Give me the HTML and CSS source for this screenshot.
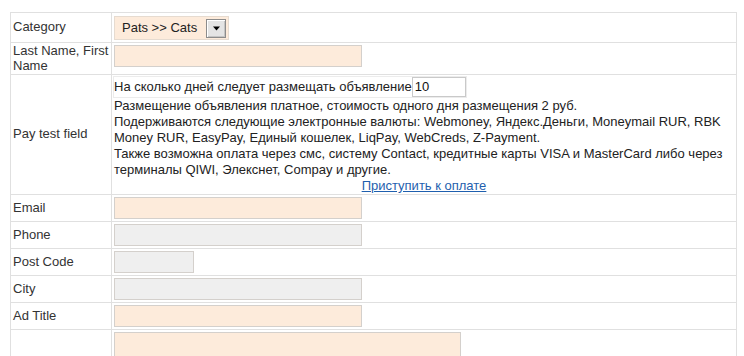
FILE: index.html
```html
<!DOCTYPE html>
<html>
<head>
<meta charset="utf-8">
<link rel="stylesheet" href="styles.css">
</head>
<body>
<table class="form">
  <tr>
    <td class="label">Category</td>
    <td class="field">
      <div class="select"><span class="select-value">Pats &gt;&gt; Cats</span><span class="select-btn"><svg width="9" height="5" viewBox="0 0 9 5"><path d="M1 0.5h7L4.5 4.5z" fill="#000"/></svg></span></div>
    </td>
  </tr>
  <tr>
    <td class="label">Last Name, First Name</td>
    <td class="field"><input class="inp req" type="text"></td>
  </tr>
  <tr>
    <td class="label">Pay test field</td>
    <td class="field pay">
      <table class="days"><tr><td>На сколько дней следует размещать объявление<input class="days-inp" type="text" value="10"></td></tr></table>
      <div class="pay-text">Размещение объявления платное, стоимость одного дня размещения 2 руб.</div>
      <div class="pay-text">Подерживаются следующие электронные валюты: Webmoney, Яндекс.Деньги, Moneymail RUR, RBK Money RUR, EasyPay, Единый кошелек, LiqPay, WebCreds, Z-Payment.</div>
      <div class="pay-text">Также возможна оплата через смс, систему Contact, кредитные карты VISA и MasterCard либо через терминалы QIWI, Элекснет, Compay и другие.</div>
      <div class="pay-text pay-link"><a href="#">Приступить к оплате</a></div>
    </td>
  </tr>
  <tr>
    <td class="label">Email</td>
    <td class="field"><input class="inp req" type="text"></td>
  </tr>
  <tr>
    <td class="label">Phone</td>
    <td class="field"><input class="inp opt" type="text"></td>
  </tr>
  <tr>
    <td class="label">Post Code</td>
    <td class="field"><input class="inp opt short" type="text"></td>
  </tr>
  <tr>
    <td class="label">City</td>
    <td class="field"><input class="inp opt" type="text"></td>
  </tr>
  <tr>
    <td class="label">Ad Title</td>
    <td class="field"><input class="inp req" type="text"></td>
  </tr>
  <tr>
    <td class="label"></td>
    <td class="field field-area"><textarea class="area"></textarea></td>
  </tr>
</table>
</body>
</html>
```

FILE: styles.css
```css
html, body {
  margin: 0;
  padding: 0;
  background: #fff;
}

body {
  font-family: "Liberation Sans", Arial, sans-serif;
  font-size: 13px;
  color: #333;
}

.form {
  border-collapse: collapse;
  width: 727px;
  margin: 12px 0 0 10px;
}

.form > tbody > tr > td {
  border: 1px solid #e0e0e0;
}

.label {
  width: 96px;
  padding: 1px 2px;
  line-height: 14.5px;
  vertical-align: middle;
}

.field {
  padding: 2px 2px;
  vertical-align: top;
}

.inp {
  display: block;
  box-sizing: border-box;
  width: 248px;
  height: 22px;
  margin: 0;
  border: 1px solid #d4d0cc;
  padding: 1px 3px;
  font: inherit;
}

.req {
  background: #fdebdb;
}

.opt {
  background: #efefef;
}

.short {
  width: 80px;
}

.select {
  display: flex;
  align-items: center;
  justify-content: space-between;
  box-sizing: border-box;
  width: 115px;
  height: 24px;
  margin-top: 1px;
  background: #fdebdb;
  border: 1px solid #e6dbd0;
  padding: 0 2px 0 7px;
  color: #222;
}

.select-value {
  line-height: 16px;
}

.select-btn {
  box-sizing: border-box;
  width: 20px;
  height: 19px;
  display: flex;
  align-items: center;
  justify-content: center;
  border: 1px solid #8c8c8c;
  background: #e4e4e4;
  box-shadow: inset 1px 1px 0 #ffffff, inset -1px -1px 0 #c4c4c4;
}

.pay {
  padding: 0 2px 0 1px;
  color: #222;
}

.days {
  border-collapse: collapse;
  margin-top: 1px;
}

.days td {
  border: 1px solid #ececec;
  padding: 0;
  line-height: 20px;
  white-space: nowrap;
}

.days-inp {
  box-sizing: border-box;
  width: 54px;
  height: 20px;
  margin: 0;
  vertical-align: top;
  border: 1px solid #c9c9c9;
  background: #fff;
  padding: 0 2px;
  font: inherit;
  color: #111;
}

.pay-text {
  line-height: 16px;
  padding-left: 1px;
}

.pay-link {
  text-align: center;
}

.pay-link a {
  color: #1f5fae;
  text-decoration: underline;
}

.field-area {
  padding-top: 2px;
}

.area {
  display: block;
  box-sizing: border-box;
  width: 347px;
  height: 90px;
  margin: 0;
  border: 1px solid #d4d0cc;
  background: #fdebdb;
  resize: none;
}
```
